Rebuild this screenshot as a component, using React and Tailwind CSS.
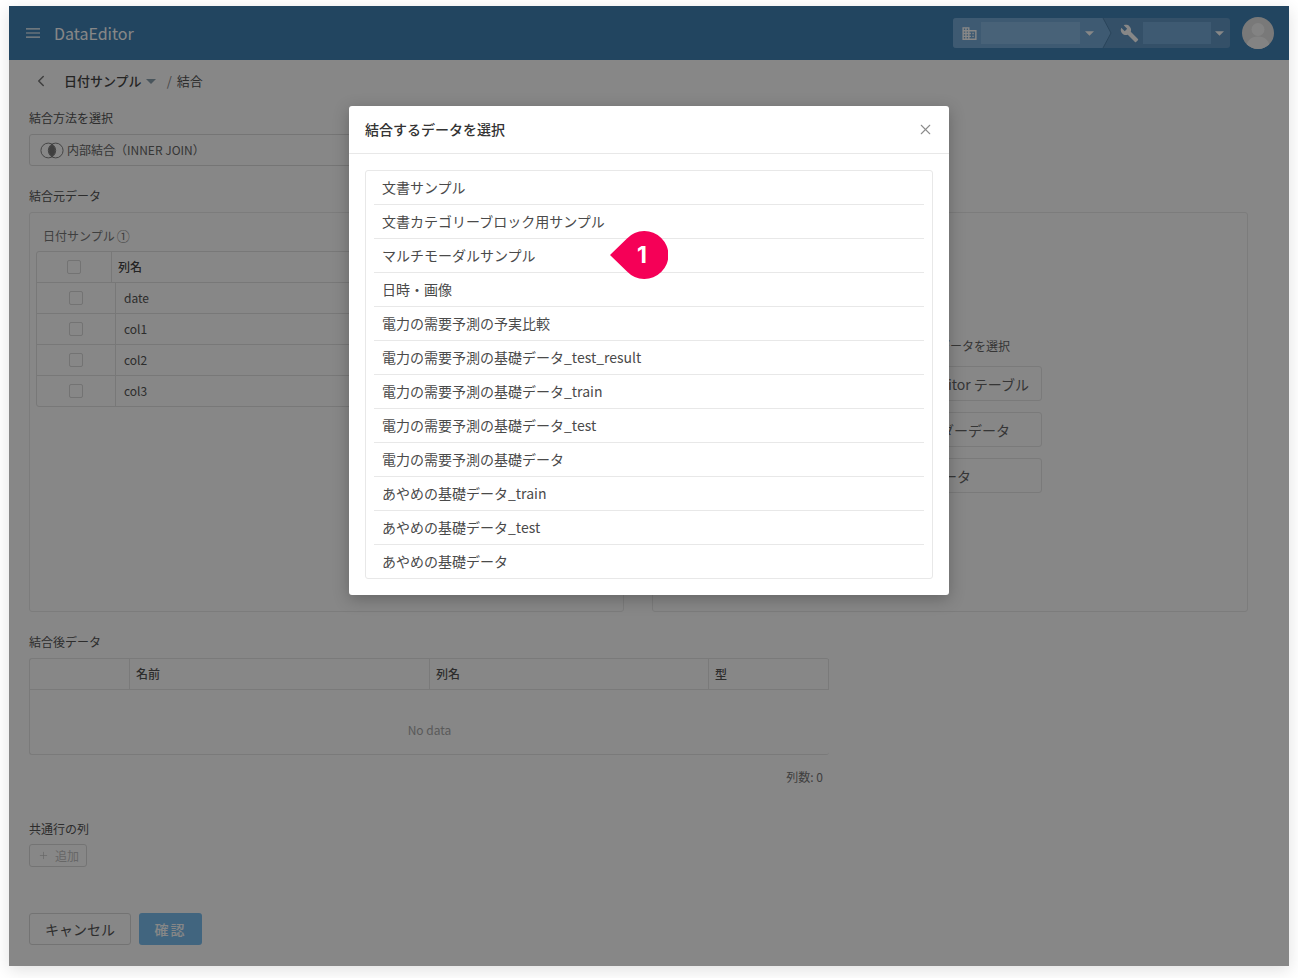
import { ChevronLeft, X, Plus } from 'lucide-react';

const FONT = "font-['Noto_Sans_CJK_JP','Noto_Sans',sans-serif]";

const datasets = [
  '文書サンプル',
  '文書カテゴリーブロック用サンプル',
  'マルチモーダルサンプル',
  '日時・画像',
  '電力の需要予測の予実比較',
  '電力の需要予測の基礎データ_test_result',
  '電力の需要予測の基礎データ_train',
  '電力の需要予測の基礎データ_test',
  '電力の需要予測の基礎データ',
  'あやめの基礎データ_train',
  'あやめの基礎データ_test',
  'あやめの基礎データ',
];

const sources = [
  { label: 'DataEditor テーブル', pad: 'pl-[40px]' },
  { label: 'カレンダーデータ', pad: 'pl-[37px]' },
  { label: '画像データ', pad: 'pl-[40px]' },
];

const Caret = ({ className }) => (
  <svg viewBox="0 0 10 5" className={className} fill="currentColor">
    <path d="M0 0h10L5 5z" />
  </svg>
);

const Label = ({ children, className = '' }) => (
  <div className={`h-6 text-xs leading-6 text-[#555] ${className}`}>{children}</div>
);

const Check = () => <span className="block h-[14px] w-[14px] rounded-[2px] border border-[#d9d9d9] bg-white" />;

const TopBar = () => (
  <div className="flex h-[54px] items-center bg-[#4082b5] pl-[17px] pr-[15px] text-white">
    <svg viewBox="0 0 14 10" className="h-[10px] w-[14px]" fill="none" stroke="currentColor" strokeWidth="1.2">
      <path d="M0 .8h14M0 5h14M0 9.200h14" />
    </svg>
    <span className="ml-[14px] text-base">DataEditor</span>
    <div className="relative ml-auto flex h-[30px] w-[277px] overflow-hidden rounded-[3px] bg-[#6297c4]">
      <div className="flex w-[158px] items-center bg-[#75aad7] [clip-path:polygon(0_0,150px_0,100%_50%,150px_100%,0_100%)]">
        <svg viewBox="0 0 24 24" className="ml-[8px] h-[17px] w-[17px] shrink-0" fill="currentColor">
          <path d="M12 7V3H2v18h20V7H12zM6 19H4v-2h2v2zm0-4H4v-2h2v2zm0-4H4V9h2v2zm0-4H4V5h2v2zm4 12H8v-2h2v2zm0-4H8v-2h2v2zm0-4H8V9h2v2zm0-4H8V5h2v2zm10 12h-8v-2h2v-2h-2v-2h2v-2h-2V9h8v10zm-2-8h-2v2h2v-2zm0 4h-2v2h2v-2z" />
        </svg>
        <span className="ml-[3px] h-[22px] w-[99px] bg-[#88b9e2]" />
        <Caret className="ml-[5px] h-[5px] w-[9px]" />
      </div>
      <div className="flex flex-1 items-center">
        <svg viewBox="0 0 24 24" className="ml-[9px] h-[19px] w-[19px] shrink-0" fill="currentColor">
          <path d="M22.7 19l-9.1-9.1c.9-2.3.4-5-1.500-6.900-2-2-5-2.400-7.400-1.300L9 6 6 9 1.600 4.700C.4 7.100.9 10.100 2.900 12.100c1.900 1.900 4.600 2.400 6.900 1.500l9.100 9.100c.4.400 1 .4 1.400 0l2.300-2.300c.5-.4.5-1.100.1-1.400z" />
        </svg>
        <span className="ml-[4px] h-[22px] w-[68px] bg-[#75aad7]" />
        <Caret className="ml-[4px] h-[5px] w-[9px]" />
      </div>
      {/* darker edge of the segment arrow */}
      <svg viewBox="0 0 277 30" className="pointer-events-none absolute inset-0 h-[30px] w-[277px]" fill="none" stroke="#4f81ab">
        <path d="M150 0 L158 15 L150 30" />
      </svg>
    </div>
    <div className="ml-[12px] h-8 w-8 overflow-hidden rounded-full bg-[#e4e4e4]">
      <svg viewBox="0 0 32 32" className="h-8 w-8" fill="#f8f8f8">
        <circle cx="16" cy="12.500" r="6.500" />
        <path d="M4 32c0-8 5-12.500 12-12.500S28 24 28 32z" />
      </svg>
    </div>
  </div>
);

const Breadcrumb = () => (
  <div className="flex h-[42px] items-center pl-[23px] text-[13px] text-[#444]">
    <ChevronLeft className="h-[18px] w-[18px] text-[#777]" strokeWidth={2} />
    <span className="ml-[14px] font-medium">日付サンプル</span>
    <Caret className="ml-[4px] h-[5px] w-[10px] text-[#8aa0ae]" />
    <span className="ml-[11px] text-[#888]">/</span>
    <span className="ml-[5px] text-[#555]">結合</span>
  </div>
);

const SourcePanel = () => (
  <div className="h-[400px] w-[595px] rounded-[3px] border border-[#eaeaea] px-[6px] pt-[11px]">
    <div className="flex h-6 items-center pl-[7px] text-xs text-[#777]">
      日付サンプル
      <span className="ml-[2px] text-[13px]">①</span>
    </div>
    <div className="mt-[3px] w-[580px] rounded-[3px] border border-[#e3e3e3] text-xs text-[#555]">
      <div className="flex h-[31px] items-center border-b border-[#e3e3e3]">
        <div className="flex h-full w-[75px] items-center border-r border-[#e3e3e3] pl-[30px]">
          <Check />
        </div>
        <span className="ml-[6px] font-medium text-[#444]">列名</span>
      </div>
      {['date', 'col1', 'col2', 'col3'].map((col, i) => (
        <div key={col} className={`flex items-center ${i < 3 ? 'h-[31px] border-b border-[#e3e3e3]' : 'h-[30px]'}`}>
          <div className="flex h-full w-[79px] items-center border-r border-[#e3e3e3] pl-[32px]">
            <Check />
          </div>
          <span className="ml-[8px]">{col}</span>
        </div>
      ))}
    </div>
  </div>
);

const TargetPanel = () => (
  <div className="flex h-[400px] w-[596px] flex-col items-start rounded-[3px] border border-[#eaeaea] pl-[207px] pt-[121px]">
    <div className="ml-[30px] h-6 text-xs leading-6 text-[#666]">結合するデータを選択</div>
    <div className="mt-2 flex flex-col gap-[11px]">
      {sources.map((item) => (
        <div
          key={item.label}
          className={`flex h-[35px] w-[182px] items-center rounded-[3px] border border-[#e6e6e6] text-sm text-[#666] ${item.pad}`}
        >
          {item.label}
        </div>
      ))}
    </div>
  </div>
);

const ResultTable = () => (
  <div className="h-[97px] w-[800px] rounded-[3px] border border-[#e6e6e6] border-r-0 text-xs">
    <div className="flex h-[31px] border-b border-r border-[#e6e6e6] font-medium text-[#555]">
      <div className="w-[100px] border-r border-[#e6e6e6]" />
      <div className="flex w-[300px] items-center border-r border-[#e6e6e6] pl-[6px]">名前</div>
      <div className="flex w-[279px] items-center border-r border-[#e6e6e6] pl-[6px]">列名</div>
      <div className="flex flex-1 items-center pl-[6px]">型</div>
    </div>
    <div className="flex h-[64px] items-center justify-center pt-[15px] text-[#aaa]">No data</div>
  </div>
);

const DataModal = () => (
  <div className="absolute left-[340px] top-[100px] z-10 h-[489px] w-[600px] rounded-[3px] bg-white shadow-[0_4px_16px_rgba(0,0,0,0.25)]">
    <div className="flex h-[48px] items-center justify-between border-b border-[#e8e8e8] pl-4 pr-[15px]">
      <span className="pb-[2px] text-sm font-medium text-[#333]">結合するデータを選択</span>
      <X className="h-[17px] w-[17px] text-[#8c8c8c]" strokeWidth={1.5} />
    </div>
    <div className="mx-4 mt-4 rounded-[3px] border border-[#e8e8e8] px-2">
      {datasets.map((name, i) => (
        <div
          key={name}
          className={`flex items-center pb-[2px] pl-2 text-sm text-[#4a4a4a] ${i < datasets.length - 1 ? 'h-[34px] border-b border-[#e8e8e8]' : 'h-[33px]'}`}
        >
          {name}
        </div>
      ))}
    </div>
    {/* annotation badge */}
    <div className="absolute left-[261px] top-[125px] h-[48px] w-[58px]">
      <svg viewBox="0 0 58 48" className="absolute inset-0 h-[48px] w-[58px]" fill="#f50057">
        <path d="M0 24 L17 7.500 A24 24 0 1 1 17 40.500 Z" />
      </svg>
      <span className="absolute inset-0 flex items-center justify-center pl-[6px] pt-px font-['Inter',sans-serif] text-[23px] font-bold text-white">
        1
      </span>
    </div>
  </div>
);

export default function App() {
  return (
    <div className={`h-[978px] w-[1298px] bg-white pl-[9px] pt-[6px] ${FONT}`}>
      <div className="relative h-[960px] w-[1280px] bg-white shadow-[0_4px_16px_rgba(0,0,0,0.12)]">
        <TopBar />
        <Breadcrumb />
        <div className="px-5 pt-1">
          <Label>結合方法を選択</Label>
          <div className="mt-1 flex h-[32px] w-[595px] items-center rounded-[3px] border border-[#dedede] pl-[10px] text-xs text-[#666]">
            <svg viewBox="0 0 26 18" className="h-[17px] w-[24px]" fill="none" stroke="#777" strokeWidth="1">
              <circle cx="9" cy="9" r="8" />
              <circle cx="17" cy="9" r="8" />
              <path d="M13 2.600a8 8 0 0 1 0 12.800a8 8 0 0 1 0-12.800z" fill="#777" />
            </svg>
            <span className="ml-[3px]">内部結合（INNER JOIN）</span>
          </div>
          <Label className="mt-[18px]">結合元データ</Label>
          <div className="mt-1 flex gap-[28px]">
            <SourcePanel />
            <TargetPanel />
          </div>
          <Label className="mt-[18px]">結合後データ</Label>
          <div className="mt-1">
            <ResultTable />
          </div>
          <div className="mt-[12px] flex h-5 w-[794px] items-center justify-end text-xs text-[#777]">列数: 0</div>
          <Label className="mt-[30px]">共通行の列</Label>
          <div className="mt-[3px] flex h-[23px] w-[58px] items-center rounded-[3px] border border-[#dcdcdc] pl-[8px] text-xs text-[#c2c2c2]">
            <Plus className="h-[11px] w-[11px]" strokeWidth={1.5} />
            <span className="ml-[6px]">追加</span>
          </div>
          <div className="mt-[46px] flex gap-2">
            <div className="flex h-[32px] w-[102px] items-center justify-center rounded-[3px] border border-[#d9d9d9] text-sm text-[#555]">
              キャンセル
            </div>
            <div className="flex h-[32px] w-[63px] items-center justify-center rounded-[3px] bg-[#7bbff0] text-sm font-medium tracking-[2px] text-white">
              確認
            </div>
          </div>
        </div>
        {/* modal backdrop */}
        <div className="absolute inset-0 bg-black/[.47]" />
        <DataModal />
      </div>
    </div>
  );
}
